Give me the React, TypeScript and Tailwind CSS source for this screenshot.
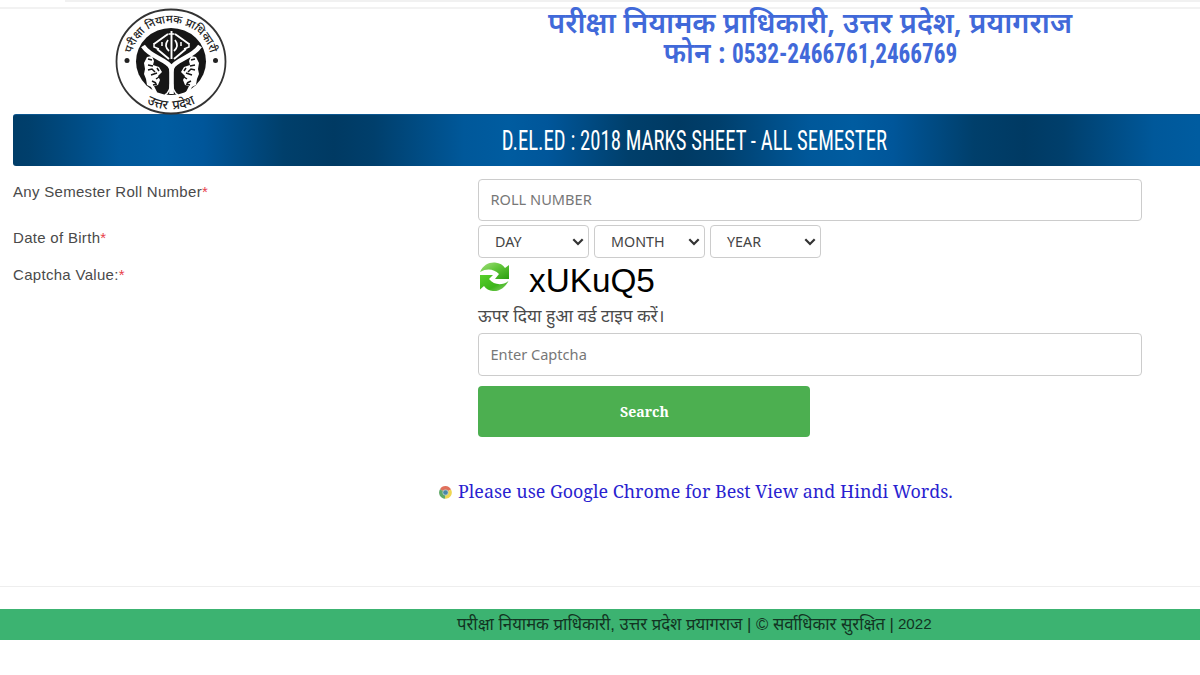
function Seal() {
  return (
    <svg className="h-[108px] w-[112px]" viewBox="0 0 112 108">
      <defs>
        <path id="ring-top" d="M17 62 A40 38.5 0 1 1 95 62" />
        <path id="ring-bottom" d="M7 54 A49 47.500 0 0 0 105 54" />
      </defs>
      <ellipse cx="56" cy="53.5" rx="54.5" ry="52" fill="#fff" stroke="#333" strokeWidth="1.8" />
      <ellipse cx="56" cy="53.5" rx="35" ry="33.5" fill="#161616" />
      <g fill="#222" className="font-['Noto_Sans',sans-serif] font-medium">
        <text fontSize="11.3" textAnchor="middle">
          <textPath href="#ring-top" startOffset="50%">परीक्षा नियामक प्राधिकारी</textPath>
        </text>
        <text fontSize="13" textAnchor="middle" wordSpacing="2">
          <textPath href="#ring-bottom" startOffset="50%">उत्तर प्रदेश</textPath>
        </text>
      </g>
      <circle cx="12" cy="52.5" r="2.5" fill="#222" />
      <circle cx="100.500" cy="52.5" r="2.5" fill="#222" />
      <g fill="none" stroke="#fff">
        <path d="M56.500 86 V60 C52 51 36 50 28 38 M56.500 60 C61 51 77 50 85 38" strokeWidth="4.600" />
        <path d="M54 58 L56.500 66 L59 58 Z" fill="#fff" strokeWidth="2" />
        <path d="M50 87 Q55 84 55.500 76 M63 87 Q58 84 57.500 76" strokeWidth="1.500" />
        <path d="M56.500 23 V51 M39 36 L53 26 M74 36 L60 26 M42 41 L54 51 M71 41 L59 51" strokeWidth="1.900" />
        <path d="M53 32 Q48.500 38 54 43 M60 32 Q64.500 38 59 43" strokeWidth="1.700" />
        <path d="M53.500 26 H59.500 M39 35 V39 L44 41 M74 35 V39 L69 41 M47 34 V38 M66 34 V38" strokeWidth="1.500" />
      </g>
      <g fill="#fff">
        <path d="M32 49 l5 -1 2 5 -1 4 6 2 3 5 -4 4 2 4 -2 5 -4 1 3 6 -3 1 -3 -6 -4 -2 -1 -6 -2 -5 1 -5 -1 -6z" />
        <path d="M81 49 l-5 -1 -2 5 1 4 -6 2 -3 5 4 4 -2 4 2 5 4 1 -3 6 3 1 3 -6 4 -2 1 -6 2 -5 -1 -5 1 -6z" />
      </g>
      <g fill="none" stroke="#161616" strokeWidth="1.500">
        <path d="M33 51 l4 1 M33 57 l5 1 M33 62 l4 -1 3 3 M36 67 l6 -2 M42 60 l2 3 M41 71 l3 -2 M37 73 l4 2 M38 77 l4 -1" />
        <path d="M80 51 l-4 1 M80 57 l-5 1 M80 62 l-4 -1 -3 3 M77 67 l-6 -2 M71 60 l-2 3 M72 71 l-3 -2 M76 73 l-4 2 M75 77 l-4 -1" />
      </g>
    </svg>
  );
}

function RefreshIcon() {
  return (
    <svg className="h-[30px] w-[31px]" viewBox="0 0 31 30">
      <defs>
        <linearGradient id="leaf-top" x1="0" y1="0" x2="1" y2="1">
          <stop offset="0" stopColor="#a5e080" />
          <stop offset="0.450" stopColor="#62c63a" />
          <stop offset="1" stopColor="#2a9e10" />
        </linearGradient>
        <linearGradient id="leaf-bottom" x1="0" y1="0" x2="1" y2="1">
          <stop offset="0" stopColor="#58d02c" />
          <stop offset="0.600" stopColor="#3cb51a" />
          <stop offset="1" stopColor="#8fd070" />
        </linearGradient>
      </defs>
      <path d="M1 10 C4 3 10 0 16 0.500 C21 1 24 3 26 6 L30 3 V17 H16 L20 12 C15 7 8 6 1 10 Z" fill="url(#leaf-top)" />
      <path d="M1 13 H14 L10 17 C15 23 23 24 29.500 19 C26 26 20 29.500 14 29 C10 28.500 7 27 5 24 L1 27.500 Z" fill="url(#leaf-bottom)" />
    </svg>
  );
}

function ChromeIcon() {
  return (
    <svg className="relative top-px h-[13px] w-[13px]" viewBox="0 0 26 26">
      <path d="M13 13 L2 6.500 A12.500 12.500 0 0 1 24 7 Z" fill="#e0705c" />
      <path d="M13 13 L24 7 A12.500 12.500 0 0 1 12 25.500 Z" fill="#efd650" />
      <path d="M13 13 L12 25.500 A12.500 12.500 0 0 1 2 6.500 Z" fill="#5fa868" />
      <circle cx="13" cy="13" r="6" fill="#b9d0cc" />
      <circle cx="13" cy="13" r="4.600" fill="#4a86a8" />
    </svg>
  );
}

function Select({ label }: { label: string }) {
  return (
    <button className="flex h-[33px] w-[111px] items-center justify-between rounded-[4px] border border-[#ccc] pr-[4px] pl-4 text-[14.3px] text-[#444]">
      {label}
      <svg className="h-[8px] w-[12px]" viewBox="0 0 12 8" fill="none" stroke="#333" strokeWidth="2.200">
        <path d="M1.300 1.300 L6 6 L10.700 1.300" />
      </svg>
    </button>
  );
}

function Label({ text }: { text: string }) {
  return (
    <div className="w-[465px] shrink-0 text-[15px] leading-[25px] tracking-[0.3px] whitespace-nowrap">
      {text}
      <span className="text-[#e8404a]">*</span>
    </div>
  );
}

const field =
  "block w-[664px] rounded-[4px] border border-[#ccc] px-[11.5px] pb-[2px] font-['Noto_Sans',sans-serif] text-[14.6px] text-[#444] placeholder:text-[#777] placeholder:opacity-100 outline-none";

export default function App() {
  return (
    <div className="h-[675px] w-[1200px] overflow-hidden bg-white font-['Liberation_Sans','Noto_Sans',sans-serif] text-[#4a4a4a]">
      <header className="flex h-[114px] flex-col">
        <div className="ml-[65px] h-[2px] shrink-0 bg-[#f1f1f1]" />
        <div className="mt-[5px] h-[2px] shrink-0 bg-[#f2f2f2]" />
        <div className="-mt-px flex h-[106px]">
          <div className="ml-[115px] w-[305px] shrink-0">
            <Seal />
          </div>
          <h1 className="-mt-px flex w-[780px] flex-col items-center font-['Noto_Sans',sans-serif] text-[28.8px] leading-[30px] font-semibold whitespace-nowrap text-[#4169d9]">
            <span>परीक्षा नियामक प्राधिकारी, उत्तर प्रदेश, प्रयागराज</span>
            <span className="flex w-[293px] justify-between">
              <span className="text-[28px]">फोन :</span>
              <span className="w-[225px]">
                <span className="inline-block origin-left scale-x-[0.86] font-['Roboto_Condensed','Roboto',sans-serif] text-[27px] font-bold">
                  0532-2466761,2466769
                </span>
              </span>
            </span>
          </h1>
        </div>
      </header>

      <div className="ml-[13px] flex h-[52px] w-[1363px] items-center rounded-[3px] border-t border-[#0b568f] bg-[repeating-linear-gradient(90deg,#003a63_-24px,#003f6c_16px,#00589a_106px,#005ca0_150px,#00569a_190px,#003f6b_271px,#003a63_321px)]">
        <h2 className="flex w-[1362px] justify-center font-['Roboto_Condensed','Roboto',sans-serif] text-[28px] whitespace-nowrap text-white">
          <span className="inline-block scale-x-[0.74]">D.EL.ED : 2018 MARKS SHEET - ALL SEMESTER</span>
        </h2>
      </div>

      <main className="ml-[13px] pt-[13px]">
        <div className="flex h-[46px]">
          <Label text="Any Semester Roll Number" />
          <input className={`${field} h-[42px]`} placeholder="ROLL NUMBER" />
        </div>
        <div className="flex h-[33px]">
          <Label text="Date of Birth" />
          <div className="flex gap-[5px] font-['Noto_Sans',sans-serif]">
            <Select label="DAY" />
            <Select label="MONTH" />
            <Select label="YEAR" />
          </div>
        </div>
        <div className="flex">
          <div className="pt-[4px]">
            <Label text="Captcha Value:" />
          </div>
          <div>
            <div className="flex h-[40px] pt-[4px] pl-px">
              <RefreshIcon />
              <span className="ml-[19px] text-[33.3px] leading-[38px] text-black">xUKuQ5</span>
            </div>
            <p className="font-['Noto_Sans',sans-serif] text-[17.4px] leading-[35px]">ऊपर दिया हुआ वर्ड टाइप करें।</p>
            <input className={`${field} h-[43px]`} placeholder="Enter Captcha" />
            <button className="mt-[10px] block h-[51px] w-[332px] rounded-[4px] bg-[#4caf50] pl-px font-['Noto_Serif',serif] text-[14.1px] font-bold text-white">
              Search
            </button>
          </div>
        </div>
      </main>

      <p className="mt-[39px] ml-[439px] flex h-[30px] items-center gap-[6px] font-['Noto_Serif',serif] text-[17.9px] whitespace-nowrap text-[#2a1fd0]">
        <ChromeIcon />
        <span>Please use Google Chrome for Best View and Hindi Words.</span>
      </p>

      <div className="mt-[80px] h-px bg-[#eee]" />
      <footer className="mt-[22px] flex h-[31px] items-center bg-[#3cb371] pl-[457px] whitespace-nowrap text-[#123322]">
        <span className="text-[16.7px]">परीक्षा नियामक प्राधिकारी, उत्तर प्रदेश प्रयागराज | © सर्वाधिकार सुरक्षित |</span>
        <span className="ml-[4px] text-[15.2px]">2022</span>
      </footer>
    </div>
  );
}
